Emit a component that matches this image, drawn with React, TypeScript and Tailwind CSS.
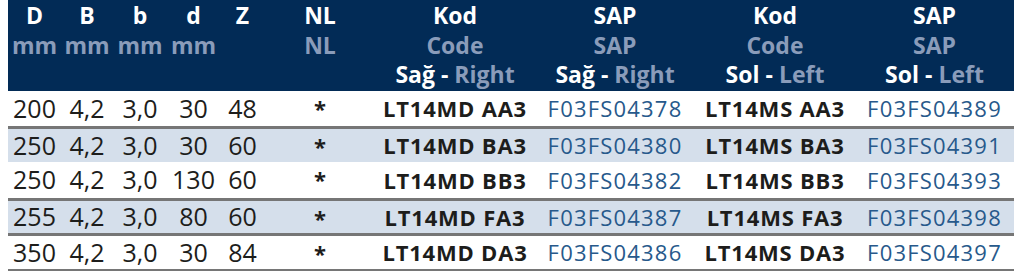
const COLS=['w-[53px]','w-[52px]','w-[54px]','w-[53px]','w-[45px]','w-[110px]','w-[160px]','w-[160px]','w-[160px]','w-[159px]'];

const ROWS=[
  {D:'200',B:'4,2',b:'3,0',d:'30',Z:'48',kr:'LT14MD AA3',sr:'F03FS04378',kl:'LT14MS AA3',sl:'F03FS04389',blue:false,line:true,h:'h-[36px]'},
  {D:'250',B:'4,2',b:'3,0',d:'30',Z:'60',kr:'LT14MD BA3',sr:'F03FS04380',kl:'LT14MS BA3',sl:'F03FS04391',blue:true,line:false,h:'h-[35px]'},
  {D:'250',B:'4,2',b:'3,0',d:'130',Z:'60',kr:'LT14MD BB3',sr:'F03FS04382',kl:'LT14MS BB3',sl:'F03FS04393',blue:false,line:true,h:'h-[37px]'},
  {D:'255',B:'4,2',b:'3,0',d:'80',Z:'60',kr:'LT14MD FA3',sr:'F03FS04387',kl:'LT14MS FA3',sl:'F03FS04398',blue:true,line:true,h:'h-[35px]'},
  {D:'350',B:'4,2',b:'3,0',d:'30',Z:'84',kr:'LT14MD DA3',sr:'F03FS04386',kl:'LT14MS DA3',sl:'F03FS04397',blue:false,line:true,h:'h-[36px]'},
];

const HEAD:[string,string,[string,string]|null][]=[
  ['D','mm',null],['B','mm',null],['b','mm',null],['d','mm',null],['Z','',null],['NL','NL',null],
  ['Kod','Code',['Sağ','Right']],['SAP','SAP',['Sağ','Right']],['Kod','Code',['Sol','Left']],['SAP','SAP',['Sol','Left']],
];

export default function App(){
  return (
    <div className="w-[1024px] h-[271px] bg-white overflow-hidden" style={{fontFamily:'"Open Sans", "Noto Sans", sans-serif'}}>
      <table className="ml-[8px] w-[1006px] table-fixed border-collapse">
        <colgroup>{COLS.map((c,i)=><col key={i} className={c}/>)}</colgroup>
        <thead>
          <tr className="bg-[#022b56] h-[91px]">
            {HEAD.map(([a,u,s],i)=>(
              <th key={i} className="p-0 pt-[1px] align-top text-center font-bold text-[23px] leading-[29.5px] whitespace-nowrap">
                <div className="text-white">{a}</div>
                <div className="text-[#8a9cba]">{u||'\u00a0'}</div>
                <div>{s?<><span className="text-white">{s[0]} - </span><span className="text-[#8a9cba]">{s[1]}</span></>:'\u00a0'}</div>
              </th>
            ))}
          </tr>
        </thead>
        <tbody>
          {ROWS.map((r,i)=>{
            const cell=`p-0 text-center whitespace-nowrap leading-none ${r.line?'border-b-[3px] border-[#767676]':''}`;
            return (
              <tr key={i} className={`${r.h} ${r.blue?'bg-[#d5dfeb]':'bg-white'}`}>
                {[r.D,r.B,r.b,r.d,r.Z].map((v,j)=><td key={j} className={`${cell} text-[25px] text-[#1d1d1b]`}>{v}</td>)}
                <td className={`${cell} align-top pt-[6px] text-[22px] font-bold text-[#1d1d1b]`}>*</td>
                <td className={`${cell} text-[22px] font-bold tracking-[0.8px] text-[#1d1d1b]`}>{r.kr}</td>
                <td className={`${cell} text-[22px] tracking-[1.2px] text-[#27598b]`}>{r.sr}</td>
                <td className={`${cell} text-[22px] font-bold tracking-[0.8px] text-[#1d1d1b]`}>{r.kl}</td>
                <td className={`${cell} text-[22px] tracking-[1.2px] text-[#27598b]`}>{r.sl}</td>
              </tr>
            );
          })}
        </tbody>
      </table>
    </div>
  );
}
